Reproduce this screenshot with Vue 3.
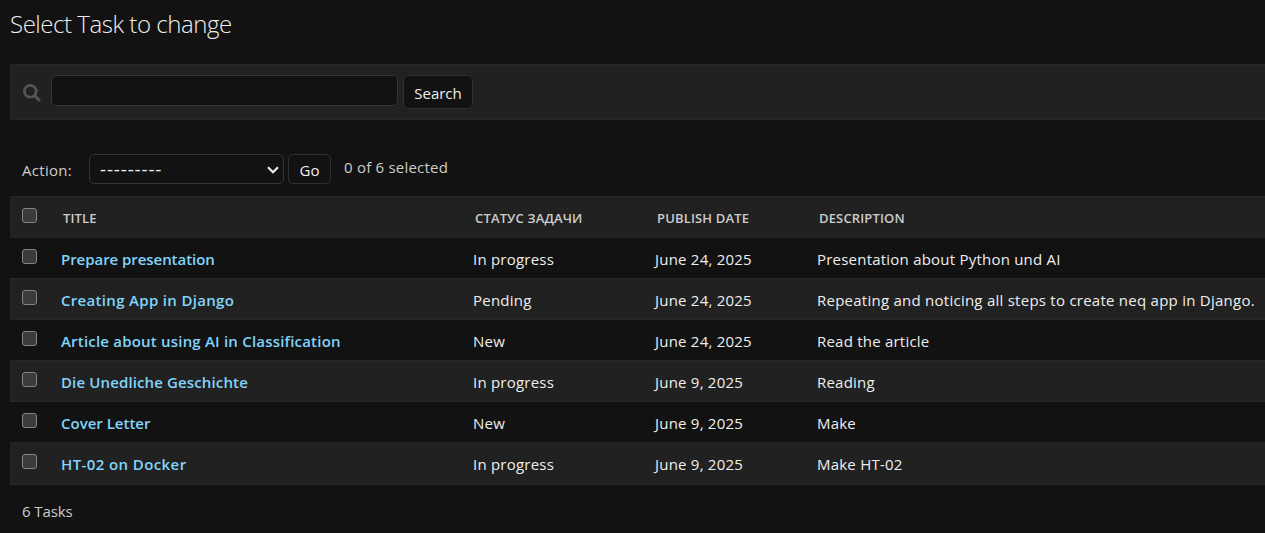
<script setup>
const tasks = [
  { title: 'Prepare presentation', status: 'In progress', date: 'June 24, 2025', description: 'Presentation about Python und AI' },
  { title: 'Creating App in Django', status: 'Pending', date: 'June 24, 2025', description: 'Repeating and noticing all steps to create neq app in Django.' },
  { title: 'Article about using AI in Classification', status: 'New', date: 'June 24, 2025', description: 'Read the article' },
  { title: 'Die Unedliche Geschichte', status: 'In progress', date: 'June 9, 2025', description: 'Reading' },
  { title: 'Cover Letter', status: 'New', date: 'June 9, 2025', description: 'Make' },
  { title: 'HT-02 on Docker', status: 'In progress', date: 'June 9, 2025', description: 'Make HT-02' }
]
</script>

<template>
  <main class="page">
    <h1><span>Select Task to change</span></h1>

    <form class="toolbar" @submit.prevent>
      <svg class="magnifier" width="18" height="18" viewBox="0 0 18 18">
        <circle cx="7.3" cy="7.3" r="5.9" fill="none" stroke="#555" stroke-width="2.8" />
        <path d="M12 12l4 4" stroke="#555" stroke-width="3" stroke-linecap="round" />
      </svg>
      <input class="query" type="text" />
      <button class="search">Search</button>
    </form>

    <div class="actions">
      <span class="label">Action:</span>
      <div class="select">
        <span class="dashes">---------</span>
        <svg class="chevron" width="12" height="8" viewBox="0 0 12 8">
          <path d="M1 1.2l5 5 5-5" fill="none" stroke="#eee" stroke-width="2.2" />
        </svg>
      </div>
      <button class="go">Go</button>
      <span class="counter">0 of 6 selected</span>
    </div>

    <div class="results">
      <div class="row head">
        <i class="check"></i>
        <span>TITLE</span>
        <span>СТАТУС ЗАДАЧИ</span>
        <span>PUBLISH DATE</span>
        <span>DESCRIPTION</span>
      </div>
      <div v-for="task in tasks" :key="task.title" class="row">
        <i class="check"></i>
        <a class="title">{{ task.title }}</a>
        <span>{{ task.status }}</span>
        <span>{{ task.date }}</span>
        <span class="desc">{{ task.description }}</span>
      </div>
    </div>

    <p class="total">6 Tasks</p>
  </main>
</template>

<style>
body {
  margin: 0;
  background: #121212;
  overflow: hidden;
}
</style>

<style scoped>
.page {
  box-sizing: border-box;
  height: 533px;
  padding-left: 10px;
  overflow: hidden;
  background: #121212;
  color: #eee;
  font: 15px/20px "Segoe UI", "Open Sans", "Noto Sans", sans-serif;
  white-space: nowrap;
}
h1 {
  margin: 0;
  height: 64px;
  padding-top: 10px;
  box-sizing: border-box;
  font-size: 24px;
  line-height: 28px;
  font-weight: 300;
  letter-spacing: -0.46px;
}
.toolbar {
  display: flex;
  box-sizing: border-box;
  height: 56px;
  padding: 10px 0 0 13px;
  background: #212121;
  border-top: 1px solid #272727;
  border-bottom: 1px solid #272727;
}
.magnifier {
  margin: 9px 10px 0 0;
}
.query {
  box-sizing: border-box;
  width: 347px;
  height: 31px;
  margin: 0 5px 0 0;
  border: 1px solid #353535;
  border-radius: 5px;
  background: #121212;
}
button {
  box-sizing: border-box;
  margin: 0;
  padding: 2px 0 0;
  border: 1px solid #303030;
  border-radius: 5px;
  background: #121212;
  color: #eee;
  font: inherit;
}
.search {
  width: 70px;
  height: 34px;
}
.actions {
  display: flex;
  height: 76px;
  box-sizing: border-box;
  padding: 34px 0 0 12px;
}
.label,
.counter,
.total {
  color: #ccc;
}
.label {
  width: 67px;
  padding-top: 6px;
  letter-spacing: 0.3px;
}
.select {
  display: flex;
  justify-content: space-between;
  box-sizing: border-box;
  width: 195px;
  height: 30px;
  padding: 4px 4px 0 10px;
  border: 1px solid #353535;
  border-radius: 5px;
}
.dashes {
  font-size: 19px;
  letter-spacing: 0.8px;
}
.chevron {
  margin-top: 7px;
}
.go {
  width: 43px;
  height: 30px;
  margin: 0 13px 0 4px;
}
.counter {
  padding-top: 3px;
  letter-spacing: 0.22px;
}
.results {
  border-top: 1px solid #272727;
  border-bottom: 1px solid #272727;
}
.row {
  display: grid;
  grid-template-columns: 39px 412px 182px 162px 1fr;
  box-sizing: border-box;
  height: 41px;
  padding: 11px 0 0 12px;
  border-bottom: 1px solid #272727;
  letter-spacing: 0.22px;
}
.row:nth-child(odd) {
  background: #212121;
}
.row.head {
  color: #ccc;
  font-size: 13px;
  font-weight: 600;
  letter-spacing: 0.15px;
}
.head span {
  padding-left: 2px;
}
.check {
  box-sizing: border-box;
  width: 15px;
  height: 15px;
  border: 1px solid #858585;
  border-radius: 3px;
  background: #3b3b3b;
}
.title {
  color: #81d4fa;
  font-weight: 600;
}
.row:nth-child(2) .title {
  letter-spacing: -0.05px;
}
.row:nth-child(3) .title {
  letter-spacing: 0.32px;
}
.row:nth-child(4) .title {
  letter-spacing: 0.2px;
}
.row:nth-child(5) .title {
  letter-spacing: 0.13px;
}
.row:nth-child(6) .title {
  letter-spacing: 0;
}
.row:nth-child(7) .title {
  letter-spacing: 0.4px;
}
.row:nth-child(3) .desc {
  letter-spacing: 0.25px;
}
.total {
  margin: 0;
  padding: 16px 0 0 12px;
  letter-spacing: -0.1px;
}
</style>
